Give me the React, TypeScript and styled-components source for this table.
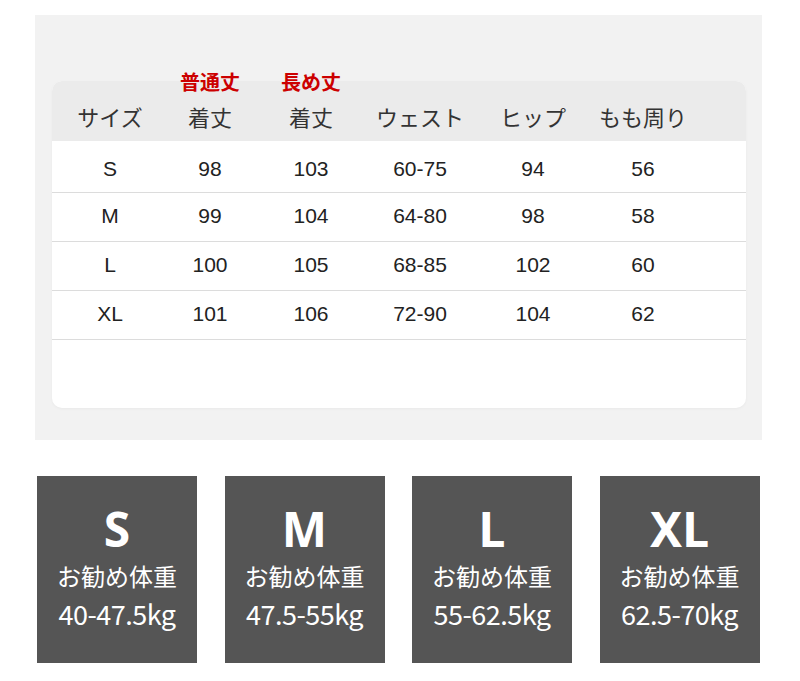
import React from "react";
import styled, { createGlobalStyle } from "styled-components";

const GlobalStyle = createGlobalStyle`
  html, body {
    margin: 0;
    padding: 0;
    background: #ffffff;
  }
  body {
    font-family: "Noto Sans CJK JP", "Noto Sans", sans-serif;
  }
`;

const COLUMNS = "116px 84px 118px 100px 126px 94px 1fr";

const HEADERS = ["サイズ", "着丈", "着丈", "ウェスト", "ヒップ", "もも周り"];

const ROWS = [
  ["S", "98", "103", "60-75", "94", "56"],
  ["M", "99", "104", "64-80", "98", "58"],
  ["L", "100", "105", "68-85", "102", "60"],
  ["XL", "101", "106", "72-90", "104", "62"],
];

const SIZES = [
  { size: "S", weight: "40-47.5kg" },
  { size: "M", weight: "47.5-55kg" },
  { size: "L", weight: "55-62.5kg" },
  { size: "XL", weight: "62.5-70kg" },
];

function App() {
  return (
    <Page>
      <GlobalStyle />
      <ChartPanel>
        <TableCard>
          <LengthTag style={{ left: 158 }}>普通丈</LengthTag>
          <LengthTag style={{ left: 259 }}>長め丈</LengthTag>
          <HeaderRow>
            {HEADERS.map((h, i) => (
              <HeadCell key={i}>{h}</HeadCell>
            ))}
          </HeaderRow>
          {ROWS.map((row, r) => (
            <BodyRow key={row[0]} $first={r === 0}>
              {row.map((v, i) => (
                <BodyCell key={i}>{v}</BodyCell>
              ))}
            </BodyRow>
          ))}
          <Filler />
        </TableCard>
      </ChartPanel>

      <WeightList>
        {SIZES.map((item) => (
          <WeightBox key={item.size}>
            <SizeName>{item.size}</SizeName>
            <WeightLabel>お勧め体重</WeightLabel>
            <WeightValue>{item.weight}</WeightValue>
          </WeightBox>
        ))}
      </WeightList>
    </Page>
  );
}

const Page = styled.div`
  width: 800px;
  height: 681px;
  padding-top: 15px;
  box-sizing: border-box;
  overflow: hidden;
`;

const ChartPanel = styled.section`
  margin-left: 35px;
  width: 727px;
  height: 425px;
  box-sizing: border-box;
  padding: 66px 16px 0 17px;
  background: #f2f2f2;
`;

const TableCard = styled.div`
  position: relative;
  height: 327px;
  display: flex;
  flex-direction: column;
  background: #ffffff;
  border-radius: 10px;
  box-shadow: 0 1px 3px rgba(0, 0, 0, 0.04);
`;

const LengthTag = styled.div`
  position: absolute;
  top: -11px;
  transform: translateX(-50%);
  color: #cc0000;
  font-size: 20px;
  font-weight: 700;
  line-height: 24px;
  white-space: nowrap;
  z-index: 1;
`;

const HeaderRow = styled.div`
  display: grid;
  grid-template-columns: ${COLUMNS};
  align-items: center;
  height: 60px;
  box-sizing: border-box;
  padding-top: 10px;
  background: #ebebeb;
  border-radius: 10px 10px 0 0;
`;

const HeadCell = styled.div`
  text-align: center;
  color: #333333;
  font-size: 22px;
  font-weight: 400;
  white-space: nowrap;
`;

const BodyRow = styled.div<{ $first?: boolean }>`
  display: grid;
  grid-template-columns: ${COLUMNS};
  align-items: center;
  height: ${({ $first }) => ($first ? 52 : 49)}px;
  box-sizing: border-box;
  padding-top: ${({ $first }) => ($first ? 4 : 0)}px;
  padding-bottom: ${({ $first }) => ($first ? 0 : 2)}px;
  border-bottom: 1px solid #dcdcdc;
`;

const BodyCell = styled.div`
  text-align: center;
  color: #222222;
  font-family: "Liberation Sans", Arial, sans-serif;
  font-size: 21px;
  white-space: nowrap;
`;

const Filler = styled.div`
  flex: 1;
`;

const WeightList = styled.div`
  display: flex;
  gap: 27.5px;
  margin-top: 36px;
  padding-left: 37px;
`;

const WeightBox = styled.div`
  width: 160px;
  height: 187px;
  box-sizing: border-box;
  padding-top: 25px;
  display: flex;
  flex-direction: column;
  align-items: center;
  background: #555555;
  color: #ffffff;
`;

const SizeName = styled.div`
  font-family: "Noto Sans", "Noto Sans CJK JP", sans-serif;
  font-size: 48px;
  font-weight: 700;
  line-height: 56px;
`;

const WeightLabel = styled.div`
  margin-top: 3px;
  font-size: 24px;
  line-height: 32px;
`;

const WeightValue = styled.div`
  margin-top: 5px;
  font-size: 27px;
  line-height: 34px;
  letter-spacing: -0.5px;
`;

export default App;
